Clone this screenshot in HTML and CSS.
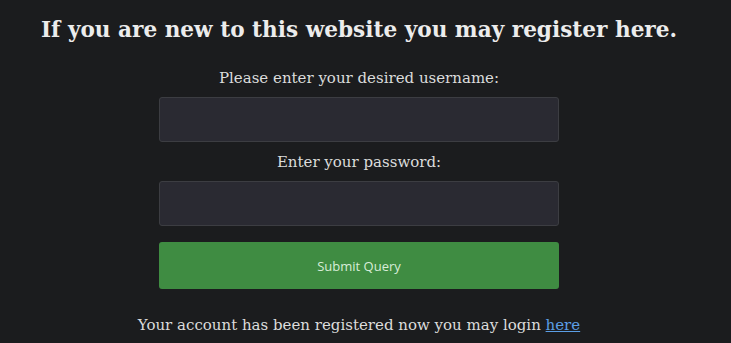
FILE: index.html
```html
<!DOCTYPE html>
<html>
<head>
<meta charset="utf-8">
<link rel="stylesheet" href="styles.css">
</head>
<body>
<div class="page">
  <h1 class="title">If you are new to this website you may register here.</h1>
  <form class="form">
    <label class="label">Please enter your desired username:</label>
    <input class="field" type="text">
    <label class="label">Enter your password:</label>
    <input class="field" type="password">
    <button class="submit" type="button">Submit Query</button>
  </form>
  <p class="note">Your account has been registered now you may login <a class="link" href="#">here</a></p>
</div>
</body>
</html>
```
FILE: styles.css
```css
html, body {
  margin: 0;
  padding: 0;
  background: #1b1c1e;
  height: 100%;
  overflow: hidden;
}
.page {
  width: 718px;
  display: flex;
  flex-direction: column;
  align-items: center;
  font-family: "DejaVu Serif", serif;
  color: #e2e2e2;
}
.title {
  margin: 14px 0 0 0;
  font-size: 21.6px;
  font-weight: bold;
  line-height: 32px;
  color: #ececec;
}
.form {
  display: flex;
  flex-direction: column;
  align-items: center;
  width: 400px;
  margin-top: 20px;
}
.label {
  font-size: 15px;
  line-height: 24px;
  color: #dcdcdc;
}
.field {
  box-sizing: border-box;
  width: 400px;
  height: 45px;
  margin: 7px 0 8px 0;
  background: #2a2a32;
  border: 1px solid #3c3d42;
  border-radius: 3px;
}
.submit {
  box-sizing: border-box;
  width: 400px;
  height: 47px;
  margin-top: 8px;
  background: #3f8c42;
  border: none;
  border-radius: 3px;
  color: #d8ecd8;
  font-family: "Open Sans", sans-serif;
  font-size: 13px;
}
.note {
  margin: 24px 0 0 0;
  font-size: 15px;
  line-height: 24px;
  color: #dcdcdc;
}
.link {
  color: #5b9ee6;
}
```
